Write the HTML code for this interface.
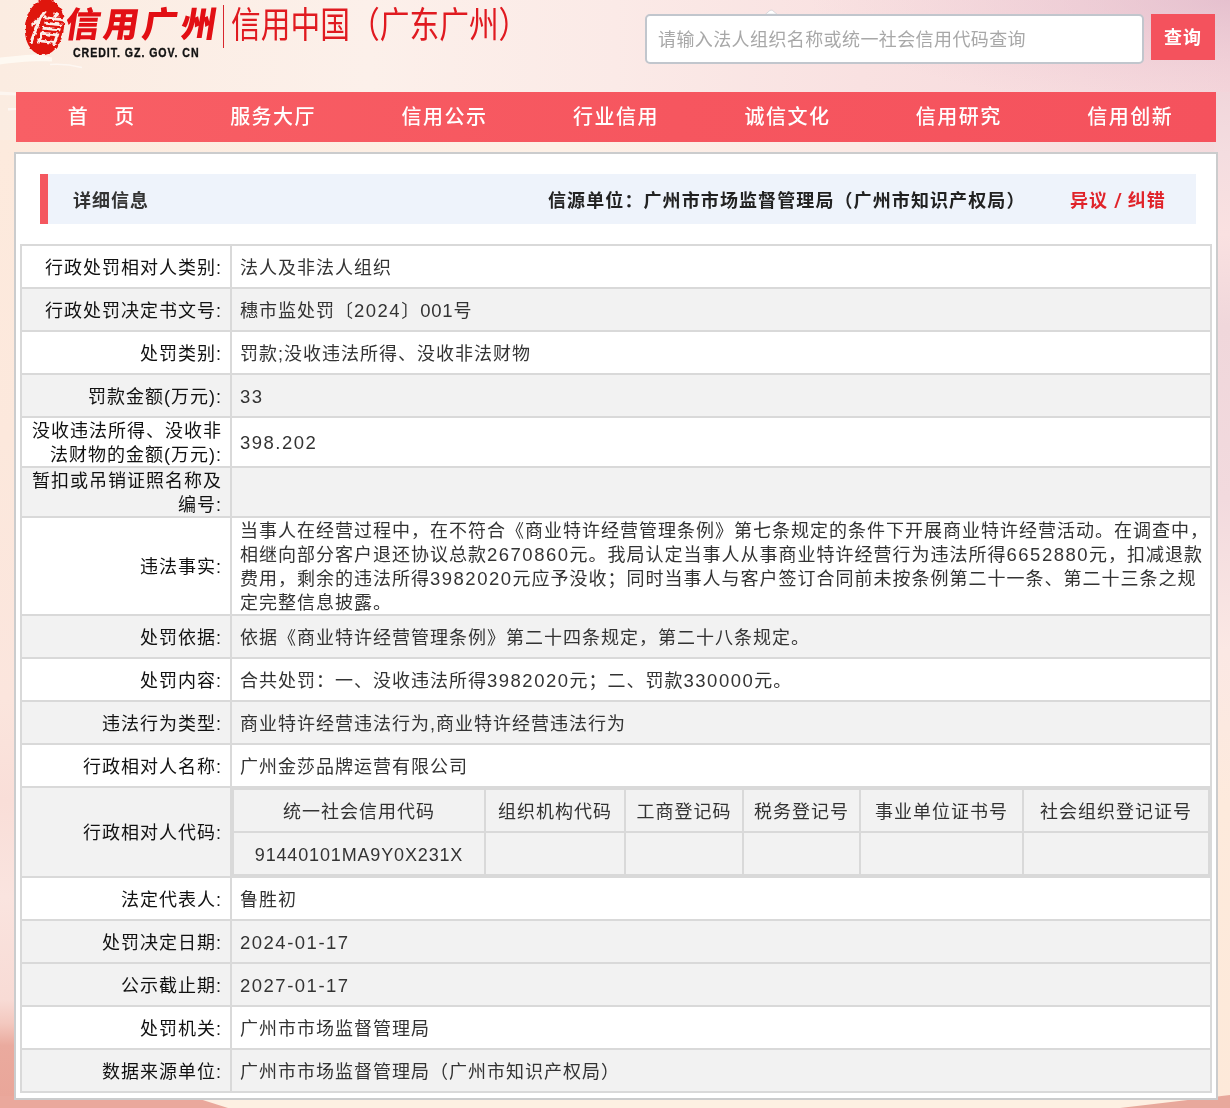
<!DOCTYPE html>
<html lang="zh-CN">
<head>
<meta charset="utf-8">
<title>信用中国（广东广州）</title>
<style>
*{box-sizing:border-box;margin:0;padding:0}
html,body{width:1230px;height:1108px;overflow:hidden}
body{position:relative;font-family:"Liberation Sans","Noto Sans CJK SC",sans-serif;color:#222;
background:#fbeee9}
#bg{position:absolute;left:0;top:0;width:1230px;height:1108px;z-index:0}
.abs{position:absolute}
#hdr,#nav,#panel{will-change:transform}
#hdr{position:absolute;left:0;top:0;width:1230px;height:92px;z-index:1}
#logo-t{left:61px;top:-2px;font-size:35px;font-weight:900;font-style:normal;transform:skewX(-9deg);transform-origin:0 100%;color:#e20f14;letter-spacing:3.7px;white-space:nowrap;line-height:54px}
#logo-e{left:73px;top:45px;font-size:12.5px;font-weight:700;color:#111;-webkit-text-stroke:.35px #111;white-space:nowrap;line-height:16px;letter-spacing:1.1px;transform-origin:0 0;transform:scaleX(0.85)}
#vline{left:223px;top:5px;width:1px;height:43px;background:#d8262c}
#title{left:230.5px;top:1px;font-size:36px;line-height:50px;color:#e01a20;white-space:nowrap;font-weight:400;transform-origin:0 0;transform:scaleX(0.826)}
#q{left:645px;top:14px;width:499px;height:50px;border:2px solid #c1c6cd;border-radius:5px;background:#fff;font-size:18px;line-height:48px;color:#a8a8a8;padding-left:11px;letter-spacing:.4px;white-space:nowrap}
#btn{left:1151px;top:14px;width:64px;height:46px;background:#f4525d;color:#fff;font-weight:700;font-size:18px;line-height:49px;text-align:center;letter-spacing:1px;padding-left:0}
#nav{position:absolute;left:16px;top:92px;width:1200px;height:50px;background:linear-gradient(90deg,#f85f65 0%,#f6565f 55%,#f5525d 100%);z-index:1;display:flex}
#nav i{display:inline-block;width:25px}
#nav div{flex:1;text-align:center;color:#fff;font-size:20px;line-height:50px;font-weight:500;letter-spacing:1.5px;white-space:nowrap}
#panel{position:absolute;left:14px;top:152px;width:1204px;height:948px;border:2px solid #cbcccd;background:#fff;z-index:1}
#tb{position:absolute;left:24px;top:20px;width:1156px;height:50px;background:#eef3fb;border-left:8px solid #f4575f;font-weight:700;font-size:18px;line-height:50px;letter-spacing:1px;white-space:nowrap;color:#222}
#tb span{position:absolute;top:1.5px}
#tb i{font-style:normal;font-weight:400;font-size:21px;display:inline-block;transform:scaleX(1.25);line-height:20px;position:relative;top:1px}
table{position:absolute;left:4px;top:90px;width:1192px;border-collapse:collapse;table-layout:fixed;font-size:18px;line-height:24px;letter-spacing:1px}
td,th{border:2px solid #d9d9d9;height:43px;font-weight:400;vertical-align:middle;padding:0}
th>span,td>span{display:inline-block;position:relative;top:1px}
b.n{font-weight:400;font-size:18.5px;letter-spacing:1.5px}
th{width:210px;text-align:right;padding-right:8px;color:#111}
td{text-align:left;padding-left:8px;white-space:nowrap;color:#333}
tr.g>th,tr.g>td{background:#f2f2f2}
#codecell{padding:0;vertical-align:top}
table.in{position:static;width:978px;margin:0}
table.in td{text-align:center;padding:2px 0 0;height:43px;border-color:#d9d9d9}
</style>
</head>
<body>
<svg id="bg" width="1230" height="1108" viewBox="0 0 1230 1108">
<defs>
<linearGradient id="gh" x1="0" y1="0" x2="1" y2="0"><stop offset="0" stop-color="#fbece1"/><stop offset="0.3" stop-color="#fcf0ea"/><stop offset="0.5" stop-color="#fbeae7"/><stop offset="0.7" stop-color="#f9e1e1"/><stop offset="0.88" stop-color="#f7dbde"/><stop offset="1" stop-color="#f5d6db"/></linearGradient>
<radialGradient id="gm" cx="1" cy="0" r="1" gradientTransform="translate(1230 0) scale(420 110) translate(-1 0)" gradientUnits="userSpaceOnUse"><stop offset="0" stop-color="#dbb2c6" stop-opacity=".6"/><stop offset="1" stop-color="#e8c4d0" stop-opacity="0"/></radialGradient>
<linearGradient id="gl" x1="0" y1="150" x2="0" y2="1108" gradientUnits="userSpaceOnUse"><stop offset="0" stop-color="#fdeadd"/><stop offset="0.3" stop-color="#fce8dc"/><stop offset="0.574" stop-color="#fbe5dd"/><stop offset="0.68" stop-color="#f9ded8"/><stop offset="0.78" stop-color="#fae4df"/><stop offset="0.887" stop-color="#f8dbd5"/><stop offset="0.912" stop-color="#f3c8bf"/><stop offset="0.935" stop-color="#eaaa9e"/><stop offset="1" stop-color="#e9a598"/></linearGradient>
<linearGradient id="gr" x1="0" y1="92" x2="0" y2="1108" gradientUnits="userSpaceOnUse"><stop offset="0" stop-color="#f1d6db"/><stop offset="0.06" stop-color="#f4dde0"/><stop offset="0.14" stop-color="#fae1e1"/><stop offset="0.23" stop-color="#f0d7db"/><stop offset="0.4" stop-color="#f2dade"/><stop offset="0.55" stop-color="#fbe8e4"/><stop offset="0.7" stop-color="#fdeadc"/><stop offset="1" stop-color="#fde9d9"/></linearGradient>
<linearGradient id="gb" x1="0" y1="0" x2="1" y2="0"><stop offset="0" stop-color="#fceadd"/><stop offset="0.45" stop-color="#fdf0e6"/><stop offset="0.7" stop-color="#fbe9e5"/><stop offset="1" stop-color="#f4dadd"/></linearGradient>
</defs>
<rect x="0" y="0" width="1230" height="1108" fill="url(#gh)"/>
<rect x="700" y="0" width="530" height="152" fill="url(#gm)"/>
<path d="M0 57.5 C15 56 28 54.5 38 54.5 L52 57.5 L52 61.5 C35 60.5 15 62 0 64.5Z" fill="#fffdf8" opacity=".72"/><path d="M50 64.5 C60 63.8 72 65 82 67.5" stroke="#fff" stroke-width="1.3" fill="none" opacity=".55"/><path d="M0 91.5 L16 92.5 L16 95.5 L0 95Z" fill="#fff" opacity=".5"/><path d="M8 108 L16 108 L16 110 L8 110.5Z" fill="#fff" opacity=".6"/>
<rect x="0" y="140" width="1230" height="14" fill="url(#gb)"/>
<rect x="0" y="150" width="20" height="958" fill="url(#gl)"/>
<rect x="1214" y="92" width="16" height="1016" fill="url(#gr)"/>
<rect x="0" y="1096" width="1230" height="12" fill="#fdf0e2"/>
<polygon points="0,1096 190,1096 228,1108 0,1108" fill="#eaa89c"/>
<polygon points="1230,1095 1120,1108 1230,1108" fill="#e8a89c"/>
</svg>
<div id="hdr">
<svg class="abs" style="left:19px;top:0" width="50" height="60" viewBox="0 0 50 60"><defs><filter id="rough" x="-8%" y="-8%" width="116%" height="116%"><feTurbulence type="fractalNoise" baseFrequency="0.22" numOctaves="2" seed="7" result="n"/><feDisplacementMap in="SourceGraphic" in2="n" scale="4" xChannelSelector="R" yChannelSelector="G"/></filter></defs><g filter="url(#rough)"><ellipse cx="25.5" cy="27" rx="19.5" ry="28" fill="#df1210" transform="rotate(7 25 27)"/><text x="25" y="41" font-size="36" font-weight="500" font-style="italic" fill="#fcefe9" text-anchor="middle" font-family="Liberation Sans, Noto Sans CJK SC, sans-serif" transform="rotate(6 25 27)">信</text></g></svg>
<div class="abs" id="logo-t">信用广州</div>
<div class="abs" id="logo-e">CREDIT. GZ. GOV. CN</div>
<div class="abs" id="vline"></div>
<div class="abs" id="title">信用中国（广东广州）</div>
<svg class="abs" style="left:763px;top:8px" width="16" height="7" viewBox="0 0 16 7"><path d="M2.5 6.2 L7 2.4 Q8.2 1.9 9.4 2.4 L14 6.2Z" fill="#fff" stroke="#d2d3d8" stroke-width=".8"/></svg>
<div class="abs" id="q">请输入法人组织名称或统一社会信用代码查询</div>
<div class="abs" id="btn">查询</div>
</div>
<div id="nav"><div>首<i></i>页</div><div>服务大厅</div><div>信用公示</div><div>行业信用</div><div>诚信文化</div><div>信用研究</div><div>信用创新</div></div>
<div id="panel">
<div id="tb"><span style="left:25px;color:#333">详细信息</span><span style="left:500px;letter-spacing:1.1px">信源单位：广州市市场监督管理局（广州市知识产权局）</span><span style="left:1022px;color:#e0232a;word-spacing:.5px">异议 <i>/</i> 纠错</span></div>
<table>
<tr><th><span>行政处罚相对人类别:</span></th><td><span>法人及非法人组织</span></td></tr>
<tr class="g"><th><span>行政处罚决定书文号:</span></th><td><span>穗市监处罚〔<b class="n">2024</b>〕<b class="n" style="letter-spacing:.8px">001</b>号</span></td></tr>
<tr><th><span>处罚类别:</span></th><td><span>罚款;没收违法所得、没收非法财物</span></td></tr>
<tr class="g"><th><span>罚款金额(万元):</span></th><td><span><b class="n">33</b></span></td></tr>
<tr><th style="height:50px"><span>没收违法所得、没收非<br>法财物的金额(万元):</span></th><td><span><b class="n">398.202</b></span></td></tr>
<tr class="g"><th style="height:50px"><span>暂扣或吊销证照名称及<br>编号:</span></th><td></td></tr>
<tr><th style="height:98px"><span>违法事实:</span></th><td><span>当事人在经营过程中，在不符合《商业特许经营管理条例》第七条规定的条件下开展商业特许经营活动。在调查中，<br>相继向部分客户退还协议总款<b class="n">2670860</b>元。我局认定当事人从事商业特许经营行为违法所得<b class="n">6652880</b>元，扣减退款<br>费用，剩余的违法所得<b class="n">3982020</b>元应予没收；同时当事人与客户签订合同前未按条例第二十一条、第二十三条之规<br>定完整信息披露。</span></td></tr>
<tr class="g"><th><span>处罚依据:</span></th><td><span>依据《商业特许经营管理条例》第二十四条规定，第二十八条规定。</span></td></tr>
<tr><th><span>处罚内容:</span></th><td><span>合共处罚：一、没收违法所得<b class="n">3982020</b>元；二、罚款<b class="n">330000</b>元。</span></td></tr>
<tr class="g"><th><span>违法行为类型:</span></th><td><span>商业特许经营违法行为,商业特许经营违法行为</span></td></tr>
<tr><th><span>行政相对人名称:</span></th><td><span>广州金莎品牌运营有限公司</span></td></tr>
<tr class="g"><th style="height:90px"><span>行政相对人代码:</span></th><td id="codecell"><table class="in"><tr><td style="width:252px">统一社会信用代码</td><td style="width:140px">组织机构代码</td><td style="width:118px">工商登记码</td><td style="width:117px">税务登记号</td><td style="width:163px">事业单位证书号</td><td>社会组织登记证号</td></tr><tr><td style="letter-spacing:.85px">91440101MA9Y0X231X</td><td></td><td></td><td></td><td></td><td></td></tr></table></td></tr>
<tr><th><span>法定代表人:</span></th><td><span>鲁胜初</span></td></tr>
<tr class="g"><th><span>处罚决定日期:</span></th><td><span><b class="n">2024-01-17</b></span></td></tr>
<tr class="g"><th><span>公示截止期:</span></th><td><span><b class="n">2027-01-17</b></span></td></tr>
<tr><th><span>处罚机关:</span></th><td><span>广州市市场监督管理局</span></td></tr>
<tr class="g"><th><span>数据来源单位:</span></th><td><span>广州市市场监督管理局（广州市知识产权局）</span></td></tr>
</table>
</div>
</body>
</html>
